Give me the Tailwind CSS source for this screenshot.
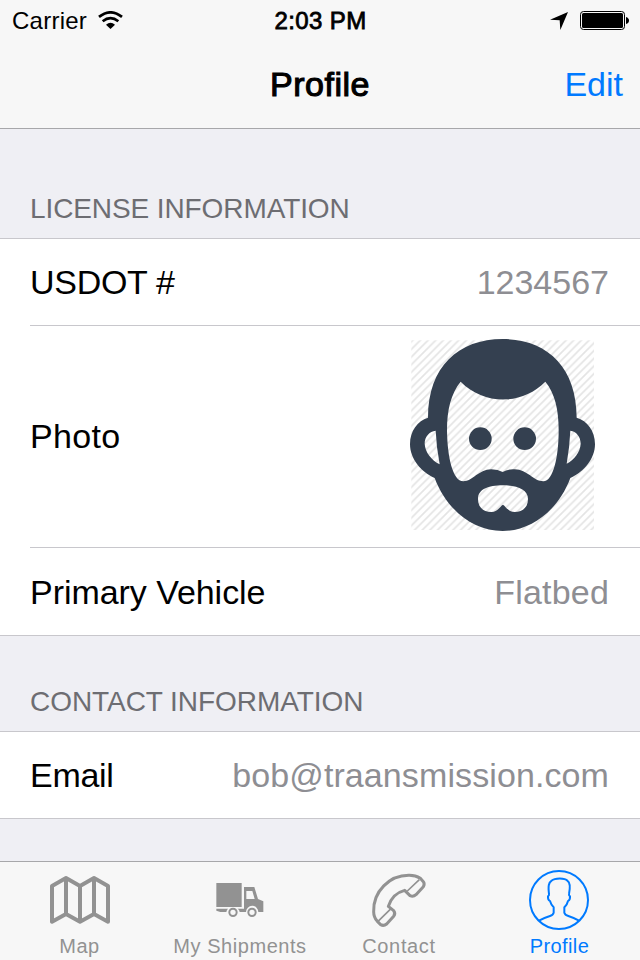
<!DOCTYPE html>
<html lang="en">
<head>
<meta charset="utf-8">
<title>Profile</title>
<script src="https://cdn.jsdelivr.net/npm/@tailwindcss/browser@4"></script>
</head>
<body class="w-[640px] h-[960px] overflow-hidden flex flex-col bg-[#efeff4] text-black font-['Liberation_Sans',Arial,sans-serif]">
<header class="h-[129px] shrink-0 bg-[#f7f7f7] border-b border-[#a7a7aa] flex flex-col">
  <div class="h-10 grid grid-cols-3 items-center pl-3 pr-[11px] text-[24px] leading-[38px]">
    <div class="flex items-center">
      <span class="tracking-[0.25px] pt-0.5">Carrier</span>
      <svg class="ml-[11px] w-[25px] h-[18px]" viewBox="0 0 75 55" preserveAspectRatio="none"><g fill="none" stroke="#000" stroke-width="8"><path d="M3 18Q37.500 -10 72 18"/><path d="M14 31Q37.500 12 61 31"/></g><path d="M24 42Q37.500 30 51 42L37.500 55Z"/></svg>
    </div>
    <span class="text-center pt-0.5 tracking-[0.4px] [-webkit-text-stroke:0.8px_#000]">2:03 PM</span>
    <div class="flex items-center justify-end">
      <svg class="mt-0.5 w-[18px] h-[18px]" viewBox="0 0 54 54"><path d="M54 0L31 54L29 25L0 23Z"/></svg>
      <svg class="mt-px ml-3 w-[49px] h-[19px]" viewBox="0 0 49 19"><rect x=".5" y=".5" width="44" height="18" rx="3" fill="none" stroke="#000"/><rect x="2" y="2" width="41" height="15" rx="1.500"/><path d="M46 6Q49 7 49 9.500Q49 12 46 13Z"/></svg>
    </div>
  </div>
  <div class="h-[88px] grid grid-cols-3 items-center px-[17px] text-[34px] leading-[44px]">
    <span></span>
    <h1 class="text-center tracking-[0.5px] [-webkit-text-stroke:1.1px_#000]">Profile</h1>
    <a class="text-right text-[#007aff]">Edit</a>
  </div>
</header>
<main class="flex-1 min-h-0 overflow-hidden text-[34px]">
  <h2 class="h-[109px] pl-[30px] pt-[63px] text-[28px] leading-[34px] tracking-[-0.1px] text-[#6d6d72]">LICENSE INFORMATION</h2>
  <section class="bg-white border-y border-[#c8c7cc] pl-[30px]">
    <div class="h-[87px] border-b border-[#c8c7cc] pr-[31px] flex items-center justify-between"><span class="tracking-[-0.3px]">USDOT #</span><span class="text-[#8e8e93]">1234567</span></div>
    <div class="h-[222px] border-b border-[#c8c7cc] pr-[45px] flex items-center justify-between"><span class="tracking-[0.3px]">Photo</span>
      <svg class="w-[185px] h-[192px] mb-1" viewBox="30 27 555 576">
        <defs><pattern id="hatch" width="23" height="23" patternUnits="userSpaceOnUse"><path d="M-6 6L6 -6M-6 29L29 -6M17 29L29 17" stroke="#e4e4e4" stroke-width="5"/></pattern></defs>
        <rect x="34" y="31" width="548" height="569" fill="url(#hatch)"/>
        <path fill="#344050" fill-rule="evenodd" d="M308 27C440 27 530 110 530 263C562 272 585 303 585 342C585 386 553 425 511 444C475 540 395 603 308 603C220 603 140 540 104 444C62 425 30 386 30 342C30 303 53 272 84 263C84 110 176 27 308 27ZM182 155C153 190 141 240 141 300C142 380 158 454 190 454C218 454 235 419 274 418Q294 418 308 426Q322 417 344 418C383 419 400 454 430 454C460 454 476 380 476 300C476 240 465 190 436 155C365 226 253 226 182 155ZM107 302C88 304 74 320 74 341C75 366 95 391 119 403Q109 350 107 302ZM511 302C529 304 542 320 542 341C541 366 522 390 500 401Q509 350 511 302ZM308 466C265 466 234 478 234 507C234 532 250 546 274 546C294 546 301 527 309 524C318 529 324 546 344 546C368 546 384 532 384 507C384 478 351 466 308 466Z"/>
        <circle cx="241" cy="326" r="34" fill="#344050"/><circle cx="374" cy="326" r="34" fill="#344050"/>
      </svg>
    </div>
    <div class="h-[87px] pt-0.5 pr-[31px] flex items-center justify-between"><span class="tracking-[-0.05px]">Primary Vehicle</span><span class="tracking-[0.2px] text-[#8e8e93]">Flatbed</span></div>
  </section>
  <h2 class="h-[95px] pl-[30px] pt-[49px] text-[28px] leading-[34px] tracking-[-0.05px] text-[#6d6d72]">CONTACT INFORMATION</h2>
  <section class="h-[88px] bg-white border-y border-[#c8c7cc] pl-[30px] pr-[31px] flex items-center justify-between"><span class="tracking-[-0.3px]">Email</span><span class="tracking-[0.1px] text-[#8e8e93]">bob@traansmission.com</span></section>
</main>
<nav class="h-[99px] shrink-0 bg-[#f7f7f7] border-t border-[#a7a7aa] grid grid-cols-4 text-[20px] leading-6 text-[#929292] text-center">
  <div class="flex flex-col items-center">
    <svg class="mt-2 w-[60px] h-[60px]" viewBox="150 45 180 180" fill="none" stroke="#929292" stroke-width="12" stroke-linejoin="round"><path d="M156 93L198 69L240 93L282 69L324 93V200L282 177L240 200L198 177L156 200ZM198 69V177M240 93V200M282 69V177"/></svg>
    <span class="mt-1 tracking-[0.6px] mr-px">Map</span>
  </div>
  <div class="flex flex-col items-center">
    <svg class="mt-2 w-[48px] h-[60px] mr-px" viewBox="647 45 144 180" fill="#929292"><path d="M648 84H724V156H648ZM648 161H683Q679 165 678 171H660L648 167ZM731 96H762L773 132L789 139V171H774A18 18 0 0 0 737 171H718Q717 164 712 161H731ZM738 108V132H763L756 108Z" fill-rule="evenodd"/><g fill="none" stroke="#929292" stroke-width="6"><circle cx="698" cy="172" r="11"/><circle cx="755" cy="172" r="11"/></g></svg>
    <span class="mt-1 tracking-[0.55px]">My Shipments</span>
  </div>
  <div class="flex flex-col items-center">
    <svg class="mt-2 w-[60px] h-[60px] mr-0.5" viewBox="149 45 180 180" fill="none" stroke="#929292" stroke-width="9" stroke-linejoin="round"><path d="M163 170C161 110 210 60 270 61C283 61 295 65 303 70L312 80Q317 87 312 95L290 119Q282 126 272 122L256 106C232 112 215 129 207 154L222 166Q230 175 223 184L202 207Q193 214 184 209L174 199C166 190 163 181 163 170Z"/><path stroke-width="5" d="M264 108L300 74M176 199L215 161"/></svg>
    <span class="mt-1 tracking-[0.65px] mr-0.5">Contact</span>
  </div>
  <div class="flex flex-col items-center text-[#007aff]">
    <svg class="mt-2 w-[60px] h-[60px] mr-0.5" viewBox="627 45 180 180" fill="none" stroke="#007aff" stroke-width="6" stroke-linejoin="round"><circle cx="717" cy="135" r="87"/><path d="M657 197Q668 190 690 183Q700 180 701 173V157Q694 151 690 138Q683 134 684 124Q688 121 687 117C684 92 686 83 695 77C704 68 735 68 742 77C750 82 751 97 747 117Q746 121 750 124Q751 134 744 138Q741 151 733 157V173Q735 180 745 183Q766 190 777 197"/></svg>
    <span class="mt-1 tracking-[0.4px] mr-px">Profile</span>
  </div>
</nav>
</body>
</html>
